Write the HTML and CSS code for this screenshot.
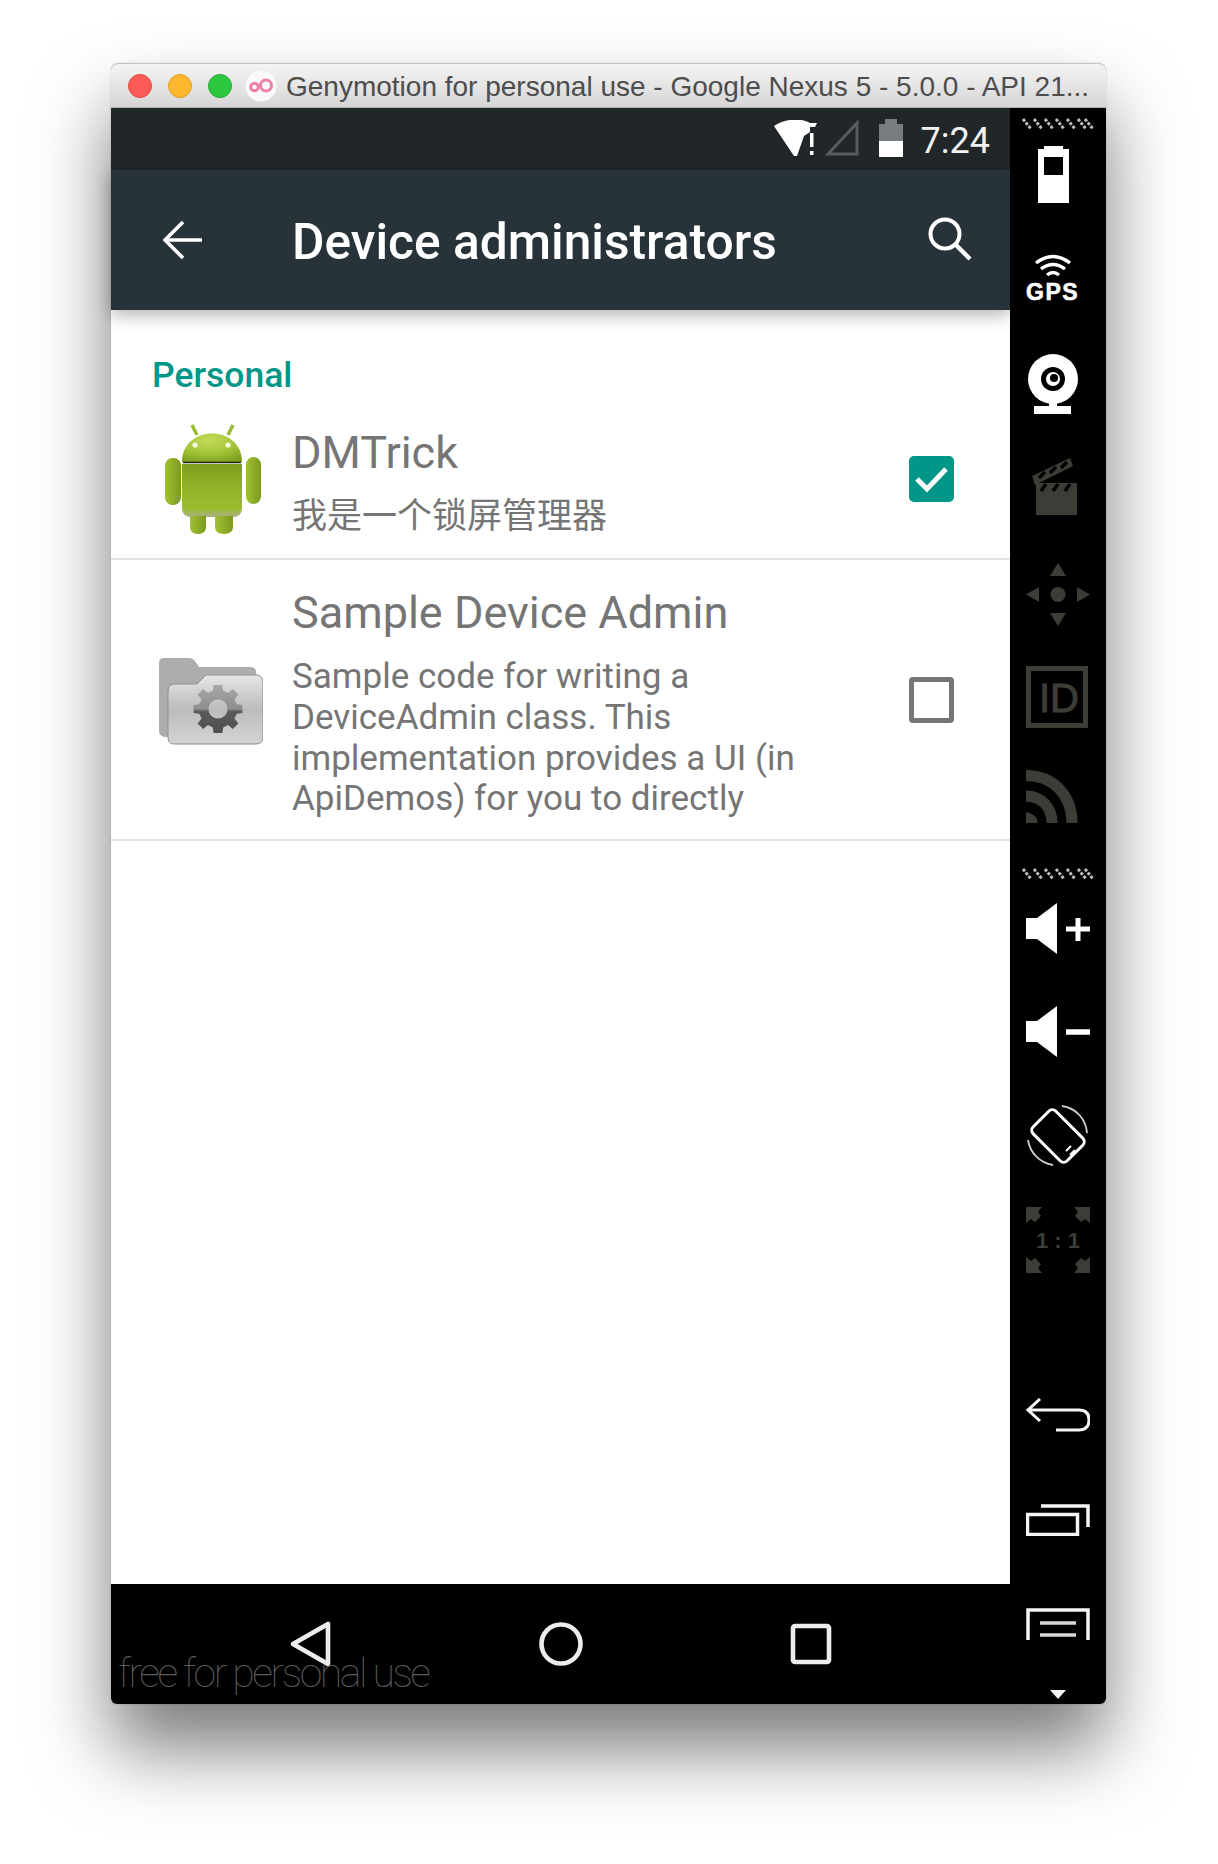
FILE: index.html
```html
<!DOCTYPE html>
<html lang="en">
<head>
    <meta charset="UTF-8">
    <meta name="viewport" content="width=device-width, initial-scale=1.0">
    <title>Genymotion - Device administrators</title>
    <link rel="stylesheet" href="styles.css">
</head>
<body>
    <div class="window">
        <div class="titlebar">
            <span class="light light-red"></span>
            <span class="light light-yellow"></span>
            <span class="light light-green"></span>
            <svg class="geny-logo" width="32" height="32" viewBox="0 0 32 32">
                <circle cx="16" cy="16" r="15.5" fill="#fafafa"/>
                <circle cx="9.5" cy="17" r="3.8" fill="none" stroke="#ee7fa6" stroke-width="3"/>
                <circle cx="21" cy="15.5" r="5.5" fill="none" stroke="#ee7fa6" stroke-width="3"/>
            </svg>
            <span class="title-text">Genymotion for personal use - Google Nexus 5 - 5.0.0 - API 21...</span>
        </div>

        <div class="screen">
            <div class="device">
                <div class="statusbar">
                    <svg class="status-wifi" width="44" height="36" viewBox="0 0 44 36">
                        <path d="M0 6 C12 -2 28 -2 36 3 L36 12 L30 16 L23 36 H20 Z" fill="#fff"/>
                        <path d="M30 3 H43 L41 7 H30 Z" fill="#fff"/>
                        <rect x="36" y="13" width="3.5" height="14" fill="#fff"/>
                        <rect x="36" y="31" width="3.5" height="4" fill="#fff"/>
                    </svg>
                    <svg class="status-signal" width="34" height="36" viewBox="0 0 34 36">
                        <path d="M3 34 L32 3 V34 Z" fill="none" stroke="#575b5e" stroke-width="3"/>
                    </svg>
                    <svg class="status-battery" width="24" height="38" viewBox="0 0 24 38">
                        <path d="M0 5 H6 V0 H18 V5 H24 V22 H0 Z" fill="#787c7f"/>
                        <rect y="22" width="24" height="16" fill="#fff"/>
                    </svg>
                    <span class="status-time">7:24</span>
                </div>

                <div class="appbar">
                    <svg class="appbar-back" width="40" height="40" viewBox="0 0 40 40">
                        <path d="M39 20 H3 M20 2 L2 20 L20 38" fill="none" stroke="#fff" stroke-width="3.6"/>
                    </svg>
                    <h1 class="appbar-title">Device administrators</h1>
                    <svg class="appbar-search" width="44" height="44" viewBox="0 0 44 44">
                        <circle cx="17" cy="17" r="14.5" fill="none" stroke="#fff" stroke-width="4"/>
                        <path d="M27 27 L42 42" stroke="#fff" stroke-width="4.4"/>
                    </svg>
                </div>

                <div class="content">
                    <div class="section-label">Personal</div>

                    <div class="admin-row admin-row-short">
                        <svg class="admin-icon" width="104" height="112" viewBox="0 0 104 112">
                            <defs>
                                <radialGradient id="droidHead" cx="0.45" cy="0.25" r="0.8">
                                    <stop offset="0" stop-color="#c4dc5c"/>
                                    <stop offset="0.6" stop-color="#a3c236"/>
                                    <stop offset="1" stop-color="#7f9e1f"/>
                                </radialGradient>
                                <linearGradient id="droidBody" x1="0" y1="0" x2="0" y2="1">
                                    <stop offset="0" stop-color="#7f9e1e"/>
                                    <stop offset="0.35" stop-color="#8fae27"/>
                                    <stop offset="0.85" stop-color="#9dbd30"/>
                                    <stop offset="1" stop-color="#a8ad8c"/>
                                </linearGradient>
                                <linearGradient id="droidLimb" x1="0" y1="0" x2="1" y2="0">
                                    <stop offset="0" stop-color="#a2c034"/>
                                    <stop offset="1" stop-color="#7b9a1f"/>
                                </linearGradient>
                            </defs>
                            <path d="M38 11 L33 1 M69 11 L74 1" stroke="#9cbb35" stroke-width="3.5"/>
                            <path d="M23 38 C23 0 83 0 83 38 Z" fill="url(#droidHead)"/>
                            <path d="M24 38.5 H82" stroke="#1e230c" stroke-width="1.6"/>
                            <circle cx="36" cy="21" r="2.6" fill="#f4f8df"/>
                            <circle cx="69" cy="21" r="2.6" fill="#f4f8df"/>
                            <path d="M23 40 H83 V84 Q83 93 73 93 H33 Q23 93 23 84 Z" fill="url(#droidBody)"/>
                            <rect x="6" y="34" width="16" height="47" rx="7.5" fill="url(#droidLimb)"/>
                            <rect x="87" y="33" width="15" height="47" rx="7.5" fill="url(#droidLimb)"/>
                            <path d="M31 92 H47 V103 Q47 110 39 110 Q31 110 31 103 Z" fill="url(#droidLimb)"/>
                            <path d="M56 92 H74 V103 Q74 110 65 110 Q56 110 56 103 Z" fill="url(#droidLimb)"/>
                        </svg>
                        <div class="admin-text">
                            <div class="admin-name">DMTrick</div>
                            <div class="admin-desc admin-desc-cjk">我是一个锁屏管理器</div>
                        </div>
                        <div class="check check-on">
                            <svg width="35" height="28" viewBox="0 0 35 28">
                                <path d="M3 14 L13 24 L32 4" fill="none" stroke="#fff" stroke-width="5"/>
                            </svg>
                        </div>
                    </div>

                    <div class="admin-row">
                        <svg class="admin-icon" width="104" height="88" viewBox="0 0 104 88">
                            <defs>
                                <linearGradient id="folderFront" x1="0" y1="0" x2="0" y2="1">
                                    <stop offset="0" stop-color="#e6e6e6"/>
                                    <stop offset="0.5" stop-color="#bcbcbc"/>
                                    <stop offset="1" stop-color="#d4d4d4"/>
                                </linearGradient>
                                <linearGradient id="gearFill" x1="0" y1="0" x2="0" y2="1">
                                    <stop offset="0" stop-color="#a8a8a8"/>
                                    <stop offset="0.5" stop-color="#8e8e8e"/>
                                    <stop offset="0.55" stop-color="#5a5a5a"/>
                                    <stop offset="1" stop-color="#4e4e4e"/>
                                </linearGradient>
                            </defs>
                            <path d="M0 6 Q0 1 5 1 H30 Q34 1 36 4 L40 10 H92 Q96 10 97 14 L98 22 V80 H8 Q0 80 0 74 Z" fill="#adadad"/>
                            <path d="M9 34 Q9 27 16 27 H38 L47 18 H97 Q104 18 104 26 V80 Q104 87 97 87 H15 Q9 87 9 80 Z" fill="url(#folderFront)" stroke="#8f8f8f" stroke-width="1"/>
                            <path fill="url(#gearFill)" fill-rule="evenodd" transform="translate(59 52) scale(0.8) translate(-58.5 -58)" d="M53 28 H64 L65 35 L71 38 L77 33 L84 40 L79 46 L82 52 L89 53 V63 L82 64 L79 70 L84 76 L77 83 L71 78 L65 81 L64 88 H53 L52 81 L46 78 L40 83 L33 76 L38 70 L35 64 L28 63 V53 L35 52 L38 46 L33 40 L40 33 L46 38 L52 35 Z M58.5 46 A12 12 0 1 0 58.5 70 A12 12 0 1 0 58.5 46 Z"/>
                        </svg>
                        <div class="admin-text">
                            <div class="admin-name">Sample Device Admin</div>
                            <div class="admin-desc">Sample code for writing a DeviceAdmin class. This implementation provides a UI (in ApiDemos) for you to directly</div>
                        </div>
                        <div class="check"></div>
                    </div>
                </div>

                <div class="navbar">
                    <svg width="44" height="48" viewBox="0 0 44 48">
                        <path d="M39 4 V44 L4 24 Z" fill="none" stroke="#ececec" stroke-width="4.6" stroke-linejoin="round"/>
                    </svg>
                    <svg width="44" height="44" viewBox="0 0 44 44">
                        <circle cx="22" cy="22" r="19.5" fill="none" stroke="#ececec" stroke-width="4.6"/>
                    </svg>
                    <svg width="42" height="42" viewBox="0 0 42 42">
                        <rect x="3" y="3" width="36" height="36" rx="2" fill="none" stroke="#ececec" stroke-width="4.6"/>
                    </svg>
                    <span class="watermark">free for personal use</span>
                </div>
            </div>

            <div class="side">
                <svg class="side-grip grip-top" width="72" height="12" viewBox="0 0 72 12">
                    <path d="M1 1 L9 11 M12 1 L20 11 M23 1 L31 11 M34 1 L42 11 M45 1 L53 11 M56 1 L64 11 M63 1 L71 11" stroke="#bdbdbd" stroke-width="3" stroke-dasharray="3 1.5"/>
                </svg>
                <svg class="side-icon ic-battery" width="64" height="57" viewBox="0 0 64 57">
                    <path d="M12 3 H18 V0 H37 V3 H43 V57 H12 Z" fill="#fff"/>
                    <rect x="18" y="11" width="19" height="18" fill="#000"/>
                </svg>
                <svg class="side-icon ic-gps" width="64" height="52" viewBox="0 0 64 52">
                    <g fill="none" stroke="#fff" stroke-width="3.4">
                        <path d="M10 9 Q27 -4 44 9"/>
                        <path d="M15 15 Q27 6 39 15"/>
                        <path d="M21 21 Q27 16 33 21"/>
                    </g>
                    <text class="gps-text" x="0" y="46">GPS</text>
                </svg>
                <svg class="side-icon ic-webcam" width="64" height="60" viewBox="0 0 64 60">
                    <circle cx="27" cy="25" r="25" fill="#fff"/>
                    <circle cx="27" cy="25" r="12" fill="#000"/>
                    <circle cx="27" cy="25" r="7" fill="#fff"/>
                    <circle cx="28" cy="24" r="4" fill="#000"/>
                    <rect x="23" y="48" width="8" height="5" fill="#fff"/>
                    <rect x="8" y="52" width="37" height="8" fill="#fff"/>
                </svg>
                <svg class="side-icon ic-clapper" width="64" height="57" viewBox="0 0 64 57">
                    <rect x="10" y="25" width="41" height="32" fill="#3d3d38"/>
                    <path d="M6 18 L44 0 L47 8 L9 27 Z" fill="#3d3d38"/>
                    <path d="M13 20 L19 14 M24 15 L30 9 M35 10 L41 4" stroke="#000" stroke-width="3.5"/>
                    <path d="M15 33 L20 26 M27 33 L32 26 M39 33 L44 26" stroke="#000" stroke-width="3.5"/>
                </svg>
                <svg class="side-icon ic-dpad" width="64" height="63" viewBox="0 0 64 63">
                    <circle cx="32" cy="31.5" r="7.5" fill="#3d3d38"/>
                    <path d="M32 0 L40 13 H24 Z M32 63 L24 50 H40 Z M0 31.5 L13 24 V39 Z M64 31.5 L51 24 V39 Z" fill="#3d3d38"/>
                </svg>
                <svg class="side-icon ic-id" width="64" height="62" viewBox="0 0 64 62">
                    <rect x="2.5" y="2.5" width="57" height="57" fill="none" stroke="#3d3d38" stroke-width="5"/>
                    <text class="id-text" x="13" y="46">ID</text>
                </svg>
                <svg class="side-icon ic-rss" width="64" height="53" viewBox="0 0 64 53">
                    <g fill="none" stroke="#3d3d38" stroke-width="11">
                        <path d="M0 5.5 C28 5.5 46 26 46 53"/>
                        <path d="M0 26 C16 26 26 38 26 53"/>
                    </g>
                    <path d="M0 42 Q11 44 12 53 H0 Z" fill="#3d3d38"/>
                </svg>
                <svg class="side-grip grip-mid" width="72" height="12" viewBox="0 0 72 12">
                    <path d="M1 1 L9 11 M12 1 L20 11 M23 1 L31 11 M34 1 L42 11 M45 1 L53 11 M56 1 L64 11 M63 1 L71 11" stroke="#bdbdbd" stroke-width="3" stroke-dasharray="3 1.5"/>
                </svg>
                <svg class="side-icon ic-volup" width="64" height="51" viewBox="0 0 64 51">
                    <path d="M0 15 H11 L31 0 V51 L11 36 H0 Z" fill="#fff"/>
                    <path d="M40 26 H64 M52 15 V38" stroke="#fff" stroke-width="5"/>
                </svg>
                <svg class="side-icon ic-voldown" width="64" height="51" viewBox="0 0 64 51">
                    <path d="M0 15 H11 L31 0 V51 L11 36 H0 Z" fill="#fff"/>
                    <path d="M40 26 H64" stroke="#fff" stroke-width="5.5"/>
                </svg>
                <svg class="side-icon ic-rotate" width="64" height="62" viewBox="0 0 64 62">
                    <rect x="16" y="7" width="32" height="48" rx="5" transform="rotate(-45 32 31)" fill="none" stroke="#fff" stroke-width="3"/>
                    <path d="M36 1 C50 3 60 14 61 28" fill="none" stroke="#ccc" stroke-width="1.8"/>
                    <path d="M2 35 C4 48 14 58 27 60" fill="none" stroke="#ccc" stroke-width="1.8"/>
                    <path d="M40 46 L45 41 M44 50 L49 45" stroke="#fff" stroke-width="2"/>
                </svg>
                <svg class="side-icon ic-ratio" width="64" height="66" viewBox="0 0 64 66">
                    <g fill="#3d3d38">
                        <path d="M0 0 H16 L12 5 L15 9 L9 15 L5 12 L0 16 Z"/>
                        <path d="M64 0 H48 L52 5 L49 9 L55 15 L59 12 L64 16 Z"/>
                        <path d="M0 66 H16 L12 61 L15 57 L9 51 L5 54 L0 50 Z"/>
                        <path d="M64 66 H48 L52 61 L49 57 L55 51 L59 54 L64 50 Z"/>
                    </g>
                    <text class="ratio-text" x="32" y="41">1 : 1</text>
                </svg>
                <svg class="side-icon ic-back" width="64" height="34" viewBox="0 0 64 34">
                    <path d="M14 1 L2 12 L14 23 M2 12 H53 Q63 12 63 22 Q63 32 53 32 H30" fill="none" stroke="#f5f5f5" stroke-width="3"/>
                </svg>
                <svg class="side-icon ic-recent" width="64" height="32" viewBox="0 0 64 32">
                    <path d="M15 2 H62 V23" fill="none" stroke="#f5f5f5" stroke-width="3.5"/>
                    <rect x="1.5" y="10.5" width="50" height="20" fill="none" stroke="#f5f5f5" stroke-width="3.5"/>
                </svg>
                <svg class="side-icon ic-menu" width="64" height="32" viewBox="0 0 64 32">
                    <path d="M2 32 V2 H62 V32" fill="none" stroke="#f5f5f5" stroke-width="3.5"/>
                    <path d="M14 15 H50 M14 27 H50" stroke="#d8d8d8" stroke-width="3.5"/>
                </svg>
                <svg class="side-icon ic-caret" width="64" height="9" viewBox="0 0 64 9">
                    <path d="M24 0 H40 L32 9 Z" fill="#f5f5f5"/>
                </svg>
            </div>
        </div>
    </div>
</body>
</html>
```

FILE: styles.css
```css
body {
    margin: 0;
    padding: 63px 0 160px 111px;
    background: #fff;
    font-family: Roboto, sans-serif;
}
.window {
    width: 995px;
    height: 1641px;
    display: flex;
    flex-direction: column;
    border-radius: 8px 8px 6px 6px;
    box-shadow: 0 45px 75px rgba(0, 0, 0, 0.52), 0 0 1px rgba(0, 0, 0, 0.5);
}
.titlebar {
    height: 45px;
    display: flex;
    align-items: center;
    box-sizing: border-box;
    padding-left: 17px;
    background: linear-gradient(#f4f4f4, #d6d6d6);
    border-top: 1px solid #c4c4c4;
    border-bottom: 1px solid #b4b4b4;
    border-radius: 8px 8px 0 0;
}
.light {
    width: 24px;
    height: 24px;
    border-radius: 50%;
    margin-right: 16px;
    box-sizing: border-box;
}
.light-red { background: #fc5b57; border: 1px solid #e5453f; }
.light-yellow { background: #fdb62e; border: 1px solid #df9e25; }
.light-green { background: #2ec840; border: 1px solid #25a732; }
.geny-logo {
    margin: 0 9px 0 -3px;
}
.title-text {
    margin-top: 3px;
    font-family: "Liberation Sans", Arial, sans-serif;
    font-size: 28px;
    color: #4d4d4d;
    white-space: nowrap;
}
.screen {
    flex: 1;
    display: flex;
    min-height: 0;
}
.device {
    width: 899px;
    display: flex;
    flex-direction: column;
}
.statusbar {
    height: 62px;
    display: flex;
    align-items: center;
    justify-content: flex-end;
    background: #212629;
    padding-right: 20px;
}
.status-wifi { margin-top: -3px; }
.status-signal { margin: -3px 0 0 7px; }
.status-battery { margin: -3px 18px 0 20px; }
.status-time {
    font-size: 36px;
    color: #f2f2f2;
    margin-top: 4px;
}
.appbar {
    height: 140px;
    display: flex;
    align-items: center;
    background: #283339;
    padding-left: 52px;
    position: relative;
    box-shadow: 0 5px 16px rgba(0, 0, 0, 0.3);
}
.appbar-back { margin-top: 0; }
.appbar-title {
    margin: 4px 0 0 89px;
    font-size: 49.7px;
    font-weight: 500;
    color: #fff;
}
.appbar-search {
    margin: -2px 38px 0 auto;
}
.content {
    flex: 1;
    background: #fff;
}
.section-label {
    padding: 45px 0 5px 41px;
    font-size: 35.5px;
    line-height: 40px;
    font-weight: 500;
    color: #009688;
}
.admin-row {
    display: flex;
    align-items: center;
    padding: 27px 56px 18.5px 48px;
    border-bottom: 2px solid #e2e2e2;
}
.admin-row-short {
    padding-bottom: 20px;
}
.admin-icon {
    flex: none;
    margin: -4px 29px 0 0;
    filter: blur(0.6px);
}
.admin-text {
    width: 522px;
}
.admin-name {
    font-size: 45px;
    line-height: 52px;
    color: #757575;
}
.admin-desc {
    margin-top: 18.5px;
    font-size: 35px;
    line-height: 40.7px;
    color: #757575;
}
.admin-desc-cjk {
    font-family: Roboto, "Noto Sans CJK SC", sans-serif;
    margin-top: 18px;
}
.check {
    margin: -6px 0 0 auto;
    width: 45px;
    height: 46px;
    box-sizing: border-box;
    border: 5px solid #757575;
    border-radius: 4px;
}
.check-on {
    display: flex;
    align-items: center;
    justify-content: center;
    background: #009688;
    border-color: #009688;
    border-radius: 5px;
}
.navbar {
    flex: none;
    height: 120px;
    display: flex;
    align-items: flex-start;
    background: #000;
    border-radius: 0 0 0 6px;
    position: relative;
}
.navbar svg:nth-child(1) { margin: 36px 0 0 178px; }
.navbar svg:nth-child(2) { margin: 38px 0 0 206px; }
.navbar svg:nth-child(3) { margin: 39px 0 0 207px; }
.watermark {
    position: absolute;
    left: 7px;
    top: 65px;
    font-size: 41px;
    font-weight: 100;
    letter-spacing: -2.45px;
    color: #5c5c5c;
    white-space: nowrap;
}
.side {
    flex: none;
    width: 96px;
    background: #000;
    border-radius: 0 0 6px 0;
}
.side svg { display: block; }
.side-icon { margin-left: 16px; }
.side-grip { margin-left: 12px; }
.grip-top { margin-top: 10px; }
.ic-battery { margin-top: 16px; }
.ic-gps { margin-top: 51px; }
.ic-webcam { margin-top: 48px; }
.ic-clapper { margin-top: 44px; }
.ic-dpad { margin-top: 48px; }
.ic-id { margin-top: 40px; }
.ic-rss { margin-top: 42px; }
.grip-mid { margin-top: 45px; }
.ic-volup { margin-top: 23px; }
.ic-voldown { margin-top: 52px; }
.ic-rotate { margin-top: 48px; }
.ic-ratio { margin-top: 40px; }
.ic-back { margin-top: 125px; }
.ic-recent { margin-top: 72px; }
.ic-menu { margin-top: 72px; }
.ic-caret { margin-top: 50px; }
.gps-text {
    font-family: "Liberation Sans", Arial, sans-serif;
    font-weight: 700;
    font-size: 23px;
    letter-spacing: 1.5px;
    fill: #fff;
    stroke: #fff;
    stroke-width: 0.6px;
}
.id-text {
    font-family: "Liberation Sans", Arial, sans-serif;
    font-size: 40px;
    fill: #3d3d38;
    stroke: #3d3d38;
    stroke-width: 1px;
}
.ratio-text {
    font-family: "Liberation Sans", Arial, sans-serif;
    font-weight: 700;
    font-size: 22px;
    text-anchor: middle;
    fill: #3d3d38;
}
```
